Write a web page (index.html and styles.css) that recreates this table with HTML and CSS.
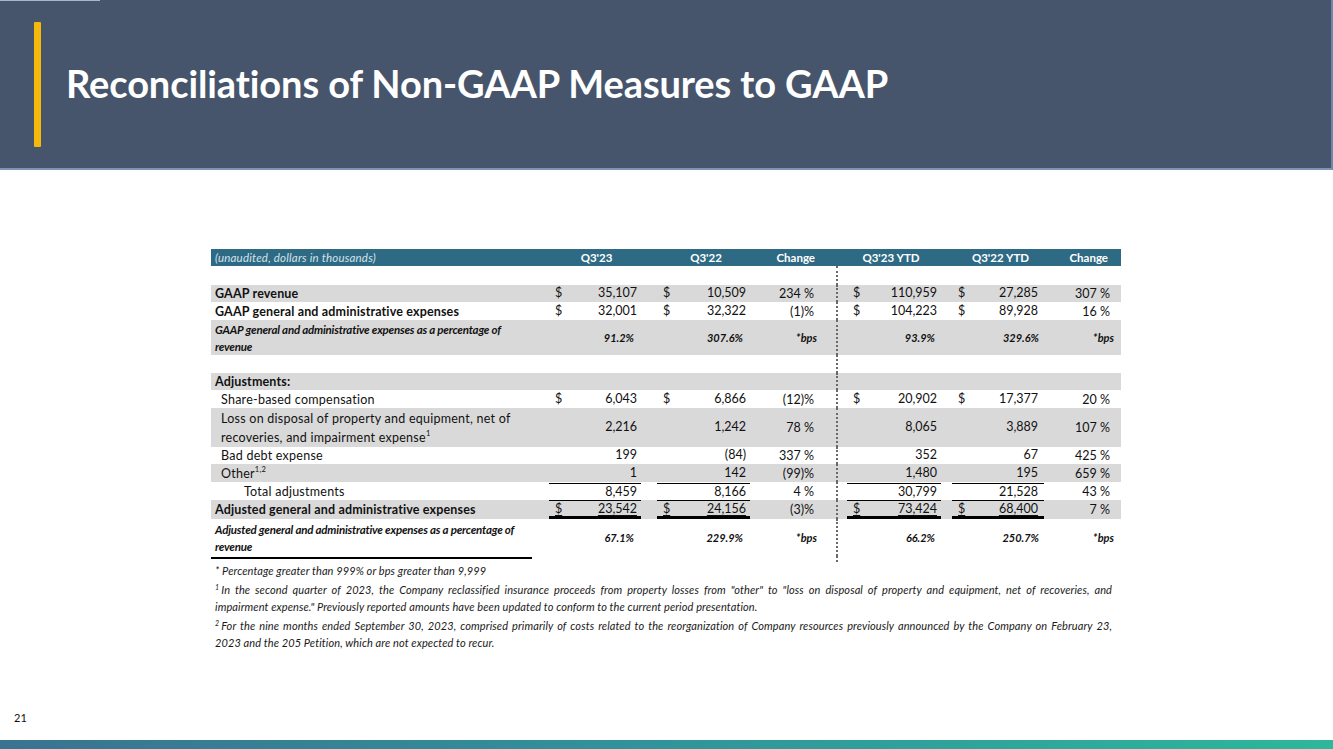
FILE: index.html
```html
<!DOCTYPE html>
<html>
<head>
<meta charset="utf-8">
<link rel="stylesheet" href="styles.css">
</head>
<body>
<header class="hdr">
  <div class="bar"></div>
  <h1 class="title">Reconciliations of Non-GAAP Measures to GAAP</h1>
</header>
<main class="main">
  <table class="recon">
    <colgroup>
      <col class="c-lbl"><col class="c-a"><col class="c-b"><col class="c-chg"><col class="c-y1"><col class="c-y2"><col class="c-chg2">
    </colgroup>
    <thead>
      <tr class="head">
        <th class="lbl unaud">(unaudited, dollars in thousands)</th>
        <th class="ctr">Q3'23</th>
        <th class="ctr shift">Q3'22</th>
        <th class="chg">Change</th>
        <th class="ctr">Q3'23 YTD</th>
        <th class="ctr shift">Q3'22 YTD</th>
        <th class="chg2">Change</th>
      </tr>
    </thead>
    <tbody>
      <tr class="blank"><td></td><td></td><td></td><td></td><td class="y1"></td><td></td><td></td></tr>
      <tr class="band r17">
        <td class="lbl b">GAAP revenue</td>
        <td class="ma"><div class="mv"><span>$</span><span>35,107</span></div></td>
        <td class="mb"><div class="mv"><span>$</span><span>10,509</span></div></td>
        <td class="chg">234 %</td>
        <td class="y1"><div class="mv"><span>$</span><span>110,959</span></div></td>
        <td class="y2"><div class="mv"><span>$</span><span>27,285</span></div></td>
        <td class="chg2">307 %</td>
      </tr>
      <tr class="r18">
        <td class="lbl b">GAAP general and administrative expenses</td>
        <td class="ma"><div class="mv"><span>$</span><span>32,001</span></div></td>
        <td class="mb"><div class="mv"><span>$</span><span>32,322</span></div></td>
        <td class="chg">(1)%</td>
        <td class="y1"><div class="mv"><span>$</span><span>104,223</span></div></td>
        <td class="y2"><div class="mv"><span>$</span><span>89,928</span></div></td>
        <td class="chg2">16 %</td>
      </tr>
      <tr class="band pct r35">
        <td class="lbl">GAAP general and administrative expenses as a percentage of<br>revenue</td>
        <td class="ma"><div class="pv">91.2%</div></td>
        <td class="mb"><div class="pv">307.6%</div></td>
        <td class="chg">* bps</td>
        <td class="y1"><div class="pv">93.9%</div></td>
        <td class="y2"><div class="pv">329.6%</div></td>
        <td class="chg2">* bps</td>
      </tr>
      <tr class="blank r18"><td></td><td></td><td></td><td></td><td class="y1"></td><td></td><td></td></tr>
      <tr class="band r17">
        <td class="lbl b">Adjustments:</td><td></td><td></td><td></td><td class="y1"></td><td></td><td></td>
      </tr>
      <tr class="r18">
        <td class="lbl ind">Share-based compensation</td>
        <td class="ma"><div class="mv"><span>$</span><span>6,043</span></div></td>
        <td class="mb"><div class="mv"><span>$</span><span>6,866</span></div></td>
        <td class="chg">(12)%</td>
        <td class="y1"><div class="mv"><span>$</span><span>20,902</span></div></td>
        <td class="y2"><div class="mv"><span>$</span><span>17,377</span></div></td>
        <td class="chg2">20 %</td>
      </tr>
      <tr class="band r39">
        <td class="lbl ind two">Loss on disposal of property and equipment, net of<br>recoveries, and impairment expense<sup>1</sup></td>
        <td class="ma"><div class="mv"><span></span><span>2,216</span></div></td>
        <td class="mb"><div class="mv"><span></span><span>1,242</span></div></td>
        <td class="chg">78 %</td>
        <td class="y1"><div class="mv"><span></span><span>8,065</span></div></td>
        <td class="y2"><div class="mv"><span></span><span>3,889</span></div></td>
        <td class="chg2">107 %</td>
      </tr>
      <tr class="r17">
        <td class="lbl ind">Bad debt expense</td>
        <td class="ma"><div class="mv"><span></span><span>199</span></div></td>
        <td class="mb"><div class="mv"><span></span><span>(84)</span></div></td>
        <td class="chg">337 %</td>
        <td class="y1"><div class="mv"><span></span><span>352</span></div></td>
        <td class="y2"><div class="mv"><span></span><span>67</span></div></td>
        <td class="chg2">425 %</td>
      </tr>
      <tr class="band r18">
        <td class="lbl ind">Other<sup>1,2</sup></td>
        <td class="ma"><div class="mv"><span></span><span>1</span></div></td>
        <td class="mb"><div class="mv"><span></span><span>142</span></div></td>
        <td class="chg">(99)%</td>
        <td class="y1"><div class="mv"><span></span><span>1,480</span></div></td>
        <td class="y2"><div class="mv"><span></span><span>195</span></div></td>
        <td class="chg2">659 %</td>
      </tr>
      <tr class="r18">
        <td class="lbl ind2">Total adjustments</td>
        <td class="ma"><div class="mv top"><span></span><span>8,459</span></div></td>
        <td class="mb"><div class="mv top"><span></span><span>8,166</span></div></td>
        <td class="chg">4 %</td>
        <td class="y1"><div class="mv top"><span></span><span>30,799</span></div></td>
        <td class="y2"><div class="mv top"><span></span><span>21,528</span></div></td>
        <td class="chg2">43 %</td>
      </tr>
      <tr class="band r18">
        <td class="lbl b">Adjusted general and administrative expenses</td>
        <td class="ma"><div class="mv top dbl"><span>$</span><span>23,542</span></div></td>
        <td class="mb"><div class="mv top dbl"><span>$</span><span>24,156</span></div></td>
        <td class="chg">(3)%</td>
        <td class="y1"><div class="mv top dbl"><span>$</span><span>73,424</span></div></td>
        <td class="y2"><div class="mv top dbl"><span>$</span><span>68,400</span></div></td>
        <td class="chg2">7 %</td>
      </tr>
      <tr class="pct r37">
        <td class="lbl">Adjusted general and administrative expenses as a percentage of<br>revenue</td>
        <td class="ma"><div class="pv">67.1%</div></td>
        <td class="mb"><div class="pv">229.9%</div></td>
        <td class="chg">* bps</td>
        <td class="y1"><div class="pv">66.2%</div></td>
        <td class="y2"><div class="pv">250.7%</div></td>
        <td class="chg2">* bps</td>
      </tr>
      <tr class="tail">
        <td class="lbl"><div class="rule"></div></td><td></td><td></td><td></td><td class="y1"></td><td></td><td></td>
      </tr>
    </tbody>
  </table>
  <div class="notes">
    <p class="note">* Percentage greater than 999% or bps greater than 9,999</p>
    <div class="note-group">
      <p class="note just"><sup>1</sup>In the second quarter of 2023, the Company reclassified insurance proceeds from property losses from "other" to "loss on disposal of property and equipment, net of recoveries, and</p>
      <p class="note">impairment expense." Previously reported amounts have been updated to conform to the current period presentation.</p>
    </div>
    <div class="note-group">
      <p class="note just"><sup>2</sup>For the nine months ended September 30, 2023, comprised primarily of costs related to the reorganization of Company resources previously announced by the Company on February 23,</p>
      <p class="note">2023 and the 205 Petition, which are not expected to recur.</p>
    </div>
  </div>
</main>
<footer class="foot">
  <div class="pg">21</div>
  <div class="stripe"></div>
</footer>
</body>
</html>
```
FILE: styles.css
```css
html, body {
  margin: 0;
  padding: 0;
}
body {
  width: 1333px;
  height: 749px;
  overflow: hidden;
  display: flex;
  flex-direction: column;
  background: #ffffff;
  font-family: Lato, "Open Sans", sans-serif;
  color: #111;
}

/* ---------- header ---------- */
.hdr {
  position: relative;
  height: 170px;
  box-sizing: border-box;
  background: #46556b;
  border-bottom: 2px solid #7c95b6;
  border-right: 2px solid #6f88aa;
  display: flex;
  align-items: center;
  padding-left: 34px;
  flex: none;
}
.hdr::before {
  content: "";
  position: absolute;
  left: 0;
  top: 0;
  width: 100px;
  height: 1px;
  background: #a8b6c7;
}
.bar {
  width: 7px;
  height: 125px;
  background: #f5b90b;
  border-radius: 1px;
  margin-top: 1px;
}
.title {
  margin: 0 0 2px 25px;
  color: #ffffff;
  font-family: Lato, sans-serif;
  font-weight: 700;
  font-size: 38px;
  letter-spacing: -0.1px;
}

/* ---------- main ---------- */
.main {
  flex: 1;
  padding: 79px 0 0 211px;
}
.recon {
  border-collapse: collapse;
  border-spacing: 0;
  table-layout: fixed;
  width: 910px;
  font-size: 12.5px;
}
.c-lbl { width: 334px; }
.c-a { width: 103px; }
.c-b { width: 108px; }
.c-chg { width: 81px; }
.c-y1 { width: 108px; }
.c-y2 { width: 103px; }
.c-chg2 { width: 73px; }

th, td {
  padding: 0;
  vertical-align: middle;
  white-space: nowrap;
}
.head th {
  background: #2e6a84;
  color: #ffffff;
  font-weight: 700;
  font-size: 11.5px;
  height: 17px;
  line-height: 17px;
}
.head .unaud {
  font-weight: 400;
  font-style: italic;
  color: #d5e3ea;
  text-align: left;
  padding-left: 4px;
  font-size: 11.5px;
  letter-spacing: 0.2px;
}
.head .ctr { text-align: center; }
.head .shift { padding-left: 8px; }
.head .chg { text-align: right; padding-right: 22px; }
.head .chg2 { text-align: right; padding-right: 13px; }

.blank td { height: 19px; }
.r17 td { height: 17px; }
.r18 td { height: 18px; }
.r35 td { height: 35px; }
.r37 td { height: 37px; }
.r39 td { height: 39px; }
.blank.r18 td { height: 18px; }
.tail td { height: 6px; vertical-align: top; }

.band td { background: #d9d9d9; }

.lbl { text-align: left; padding-left: 4px; letter-spacing: 0.25px; }
.lbl.b { font-weight: 700; letter-spacing: 0.15px; }
.lbl.ind { padding-left: 10px; }
.lbl.ind2 { padding-left: 33px; }
.lbl.two { line-height: 19px; }
sup { font-size: 7.5px; vertical-align: 6px; line-height: 0; }

.y1 { border-left: 2px dotted #6a6a6a; }

.mv {
  display: flex;
  justify-content: space-between;
  box-sizing: border-box;
  height: 17px;
  line-height: 16px;
}
.ma .mv { margin: 0 7px 0 4px; padding: 0 4px 0 6px; }
.mb .mv { margin: 0 6px 0 9px; padding: 0 4px 0 6px; }
.y1 .mv { margin: 0 4px 0 9px; padding: 0 4px 0 6px; }
.y2 .mv { margin: 0 4px 0 7px; padding: 0 6px 0 6px; }
.mv.top { border-top: 1.5px solid #000; }
.mv.dbl { border-bottom: 3px solid #000; height: 19px; line-height: 15px; }
.mv.dbl span { text-decoration: underline; text-decoration-thickness: 1px; text-underline-offset: 2px; }

.chg { text-align: right; padding-right: 22px; }
.chg2 { text-align: right; padding-right: 11px; }

.pct td {
  font-weight: 700;
  font-style: italic;
  font-size: 11px;
}
.pct .lbl {
  font-size: 11.5px;
  line-height: 17px;
  letter-spacing: -0.2px;
}
.pv { text-align: right; }
.ma .pv { padding-right: 14px; }
.mb .pv { padding-right: 13px; }
.y1 .pv { padding-right: 10px; }
.y2 .pv { padding-right: 9px; }
.pct .chg { padding-right: 19px; word-spacing: -2px; }
.pct .chg2 { padding-right: 7px; word-spacing: -2px; }

.rule {
  width: 321px;
  border-top: 2.5px solid #000;
  margin-top: 1px;
  margin-left: -4px;
}

/* ---------- notes ---------- */
.notes {
  width: 897px;
  padding-left: 4px;
}
.note {
  margin: 0;
  font-style: italic;
  font-size: 11px;
  line-height: 17px;
  letter-spacing: 0.1px;
  color: #1a1a1a;
}
.note-group { margin-top: 2px; }
.note.just {
  text-align: justify;
  text-align-last: justify;
}
.note sup { font-size: 7px; vertical-align: 4px; margin-right: 2px; }

/* ---------- footer ---------- */
.foot { flex: none; }
.pg {
  height: 31px;
  padding-left: 14px;
  font-size: 11px;
  line-height: 18px;
  color: #111;
}
.stripe {
  height: 9px;
  background: linear-gradient(90deg, #3a7390 0%, #31949a 50%, #2db79b 100%);
}
```
